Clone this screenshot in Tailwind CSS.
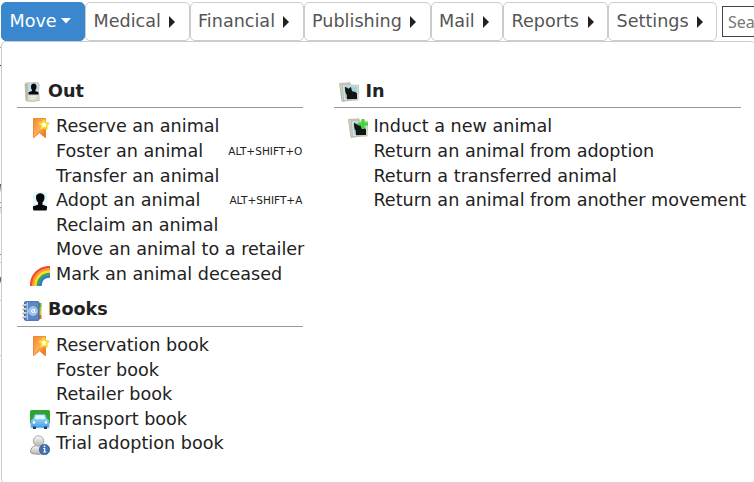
<!DOCTYPE html>
<html lang="en"><head><meta charset="utf-8"><title>Move menu</title>
<script src="https://cdn.jsdelivr.net/npm/@tailwindcss/browser@4"></script></head>
<body class="w-[754px] h-[482px] overflow-hidden bg-white font-['DejaVu_Sans',sans-serif] text-[17.6px] text-[#222]">
<svg width="0" height="0" class="absolute">
<defs>
<linearGradient id="org" x1="0" y1="0" x2="1" y2="1"><stop offset="0" stop-color="#f08a30"/><stop offset=".5" stop-color="#ffac58"/><stop offset="1" stop-color="#ec6410"/></linearGradient>
<linearGradient id="grey" x1="0" y1="0" x2="0" y2="1"><stop offset="0" stop-color="#fafafa"/><stop offset="1" stop-color="#b4b4b0"/></linearGradient>
<linearGradient id="blue" x1="0" y1="0" x2="0" y2="1"><stop offset="0" stop-color="#c5e6fb"/><stop offset="1" stop-color="#3f9fe8"/></linearGradient>
<symbol id="bookmark" viewBox="0 0 20 20"><path d="M3.500.5h12v19.300L9.500 14.800 3.500 19.800z" fill="url(#org)" stroke="#e87820" stroke-width=".8"/><path d="M14 2l1.500 2.700 3.200.6-2.200 2.400.4 3.200-2.900-1.400-2.900 1.400.4-3.200-2.200-2.400 3.200-.6z" fill="#fffde8" stroke="#f5da28" stroke-width="1.700" stroke-linejoin="round"/></symbol>
<symbol id="person" viewBox="0 0 20 20"><rect x="3" y="0" width="14" height="17" rx="4" fill="#e4f6fc"/><path d="M6 5c0-5 8.500-5 8.500 0 0 2-.5 4-2 5.500v2.200l4.500 1.500q.5 2-.5 4.300H3.500Q2.500 16 3 14.200l5-1.500v-2.200C6.500 9 6 7 6 5z" fill="#070707"/></symbol>
<symbol id="out" viewBox="0 0 20 20"><path d="M3 2q0-1 1-1l12-.5 1.200 2-.7 7 .8 9q-7 1.500-13 .5z" fill="#dcddcf" stroke="#b5b6a6" stroke-width=".8"/><path d="M3 2.500l3-1 .3 5-.6 12L3.500 18z" fill="#b9bbab"/><rect x="7" y="1.500" width="9.500" height="11" fill="#b9dcee"/><path d="M9 4.500c0-4 5.500-4 5.500 0 0 2-.5 3-1.200 3.500v1l3.200 1.200V12.500H6.500v-2.300L10 9V8C9.300 7.400 9 6 9 4.500z" fill="#090a0b"/><path d="M8 14.700h6M8 16.700h5" stroke="#eff0e6"/></symbol>
<symbol id="cat" viewBox="0 0 20 20"><path d="M.5 1.500L11 .8l2 17-10 1.700z" fill="#cfd0c0" stroke="#aaa999" stroke-width=".7"/><path d="M3.500 2.800l16 .5L19 18l-14.500.7z" fill="#e3e6dc" stroke="#adaea4" stroke-width=".7"/><path d="M5.200 4.300l13 .2-.2 11.800-12 .4z" fill="#9bd3df"/><path d="M6 4.800l3.500 2L12 5l1 4.300c2 .3 4.200.7 5 2.200V17l-10 .2c-.4-2 .3-3.500-.4-4.700C6.300 11.500 6 8 6 4.800z" fill="#141414"/></symbol>
</defs></svg>
<div class="relative w-[754px] h-[482px] overflow-hidden">
<div class="absolute left-0 top-[41px] w-2 h-[441px] bg-[#fcfcfc] flex flex-col">
<i class="h-px mt-[6px] bg-[#aaa]"></i><i class="h-px mt-[17px] bg-[#333]"></i><i class="h-[8px] mt-[118px] bg-linear-to-b from-[#555] to-[#eee]"></i><i class="h-px mt-[10px] bg-[#999]"></i><i class="h-px mt-[4px] bg-[#999]"></i><i class="h-[5px] bg-[#ddd]"></i><i class="h-px mt-[41px] bg-[#888]"></i><i class="h-px mt-[7px] bg-[#ccc]"></i><i class="h-[2px] mt-[14px] bg-[#4479bd]"></i><i class="h-[2px] bg-[#8d4b35]"></i><i class="h-[2px] bg-[#efa14c]"></i><i class="h-px mt-[17px] bg-[#ccc]"></i><i class="h-px mt-[54px] bg-[#ccc]"></i>
</div>
<nav class="relative flex pl-px pt-[2px] h-[41px] text-[#555]">
<div class="flex-none w-[84px] h-[39px] rounded-[5px] border border-[#3a87cd] bg-[#3a87cd] text-white pl-[7.500px] flex items-center">Move<svg class="ml-[4.500px] mb-[2px]" width="10" height="6"><path d="M0 0h10L5 5.500z" fill="#fff"/></svg></div>
<div class="flex-none w-[105px] h-[39px] rounded-[5px] border border-[#ccc] pl-[7.500px] pr-[14px] flex items-center justify-between">Medical<svg width="6" height="12"><path d="M0 0v12L6 6z" fill="#222"/></svg></div>
<div class="flex-none w-[114px] h-[39px] rounded-[5px] border border-[#ccc] pl-[7px] pr-[14px] flex items-center justify-between">Financial<svg width="6" height="12"><path d="M0 0v12L6 6z" fill="#222"/></svg></div>
<div class="flex-none w-[127px] h-[39px] rounded-[5px] border border-[#ccc] pl-[7px] pr-[14px] flex items-center justify-between">Publishing<svg width="6" height="12"><path d="M0 0v12L6 6z" fill="#222"/></svg></div>
<div class="flex-none w-[72px] h-[39px] rounded-[5px] border border-[#ccc] pl-[7px] pr-[13px] flex items-center justify-between">Mail<svg width="6" height="12"><path d="M0 0v12L6 6z" fill="#222"/></svg></div>
<div class="flex-none w-[105px] h-[39px] rounded-[5px] border border-[#ccc] pl-[7.500px] pr-[13px] flex items-center justify-between">Reports<svg width="6" height="12"><path d="M0 0v12L6 6z" fill="#222"/></svg></div>
<div class="flex-none w-[109px] h-[39px] rounded-[5px] border border-[#ccc] pl-[7.500px] pr-[13px] flex items-center justify-between">Settings<svg width="6" height="12"><path d="M0 0v12L6 6z" fill="#222"/></svg></div>
<div class="flex-none ml-[5px] mt-1 w-[32px] h-[31px] border border-r-0 border-[#444] bg-white pl-[5px] pt-px text-[16px] text-[#777] font-['Noto_Sans',sans-serif] flex items-center">Sea</div>
</nav>
<main class="relative ml-px w-[755px] h-[443px] rounded-[5px] border border-[#ccc] bg-white flex leading-[24.64px] whitespace-nowrap">
<div class="flex-none w-[286px] ml-[15px] pt-[37px]">
<h2 class="font-bold flex h-[29px] border-b border-[#999]"><svg class="ml-[5px] mr-[6px] mt-[3px]" width="20" height="20"><use href="#out"/></svg>Out</h2>
<ul class="pt-[6px]">
<li class="flex h-[24.64px]"><svg class="ml-[13px] mr-[6px] mt-[4px]" width="20" height="20"><use href="#bookmark"/></svg>Reserve an animal</li>
<li class="flex h-[24.64px] pl-[39px] pr-[.6px] justify-between">Foster an animal<span class="text-[10.560px]">ALT+SHIFT+O</span></li>
<li class="h-[24.64px] pl-[39px] pt-[.3px]">Transfer an animal</li>
<li class="flex h-[24.64px] pr-[.6px]"><svg class="ml-[13px] mr-[6px] mt-[4px]" width="20" height="20"><use href="#person"/></svg><span class="grow">Adopt an animal</span><span class="text-[10.560px]">ALT+SHIFT+A</span></li>
<li class="h-[24.64px] pl-[39px]">Reclaim an animal</li>
<li class="h-[24.64px] pl-[39px]">Move an animal to a retailer</li>
<li class="flex h-[24.64px]"><svg class="ml-[13px] mr-[6px] mt-[4px]" width="20" height="20" fill="none" stroke-width="2.700"><path d="M1.200 20C1.200 9 9 1.200 20 1.200" stroke="#f04b35"/><path d="M3.500 20C3.500 10 10 3.500 20 3.500" stroke="#ff9d23"/><path d="M5.800 20C5.800 12 12 5.800 20 5.800" stroke="#f4df36"/><path d="M8 20C8 13 13 8 20 8" stroke="#38a947"/><path d="M10.300 20c0-6 4-9.700 9.700-9.700" stroke="#3477d3"/></svg>Mark an animal deceased</li>
</ul>
<h2 class="font-bold flex h-[29.500px] mt-[11px] border-b border-[#999]"><svg class="ml-[5px] mr-[6px] mt-[4px]" width="20" height="20"><path d="M17 2h2.500v4H17z" fill="#67b52e"/><path d="M17 6h2.500v4H17z" fill="#a9c93a"/><path d="M17 10h2.500v4H17z" fill="#edc328"/><path d="M17 14h2.500v4H17z" fill="#e06b30"/><rect x="2.500" y=".7" width="14.500" height="18.600" rx="1" fill="#5b8ac7" stroke="#345f9e"/><path d="M5.500 1v18" stroke="#a7c8ec"/><circle cx="11" cy="10" r="4.200" fill="#98bde8" stroke="#bcd5f0"/><circle cx="11" cy="10" r="1.500" fill="none" stroke="#fff"/><path d="M12.500 8v3l1.500.5" fill="none" stroke="#fff"/><path d="M.5 4h4M.5 8h4M.5 12h4M.5 16h4" stroke="#ddd" stroke-width="2"/><path d="M.5 5h4M.5 9h4M.5 13h4M.5 17h4" stroke="#777" stroke-width=".7"/></svg>Books</h2>
<ul class="pt-[6px]">
<li class="flex h-[24.64px]"><svg class="ml-[13px] mr-[6px] mt-[3px]" width="20" height="20"><use href="#bookmark"/></svg>Reservation book</li>
<li class="h-[24.64px] pl-[39px]">Foster book</li>
<li class="h-[24.64px] pl-[39px]">Retailer book</li>
<li class="flex h-[24.64px]"><svg class="ml-[13px] mr-[6px] mt-[3px]" width="20" height="20"><path d="M0 1.500Q0 0 1.500 0h17Q20 0 20 1.500V13H0z" fill="#30a52b"/><path d="M0 13h20v6H0z" fill="#edf5f8"/><path d="M3.500 8.500L5 4.500h10l1.500 4L19 10.500v6q0 1-1 1H2q-1 0-1-1v-6z" fill="url(#blue)" stroke="#62aee7" stroke-width=".7"/><path d="M5 9l1.200-3.500h7.600L15 9z" fill="#e1f5ff"/><path d="M3 16.500h3V19H3zM14 16.500h3V19h-3z" fill="#263e50"/><circle cx="4" cy="12.500" r="1.300" fill="#fff"/><circle cx="16" cy="12.500" r="1.300" fill="#fff"/></svg>Transport book</li>
<li class="flex h-[24.64px]"><svg class="ml-[13px] mr-[6px] mt-[4px]" width="20" height="20"><path d="M.5 17c0-4 2.500-6 5.500-6.500h5c3.500.5 5.500 3 5.500 6.500 0 3-16 3-16 0z" fill="url(#grey)" stroke="#999"/><circle cx="8.500" cy="6" r="5.200" fill="url(#grey)" stroke="#aaa"/><circle cx="14.500" cy="14.500" r="5.200" fill="#426fad" stroke="#254e8c" stroke-width=".6"/><path d="M13.300 13.500h1.400V17m-1.500 0h3" fill="none" stroke="#fff" stroke-width="1.200"/><circle cx="14.500" cy="11.300" r=".9" fill="#fff"/></svg>Trial adoption book</li>
</ul></div>
<div class="flex-none w-[407px] ml-[31px] pt-[37px]">
<h2 class="font-bold flex h-[29px] border-b border-[#999]"><svg class="ml-[5px] mr-[6.400px] mt-[3px]" width="20" height="20"><use href="#cat"/></svg>In</h2>
<ul class="pt-[6px]">
<li class="flex h-[24.64px]"><svg class="ml-[14px] mr-[5.400px] mt-[4px]" width="20" height="20"><use href="#cat"/><path d="M13.500 1h3v3.500H20v3h-3.500V11h-3V7.500H10v-3h3.500z" fill="#42d72b"/></svg>Induct a new animal</li>
<li class="h-[24.64px] pl-[39.400px]">Return an animal from adoption</li>
<li class="h-[24.64px] pl-[39.400px] pt-[.3px]">Return a transferred animal</li>
<li class="h-[24.64px] pl-[39.400px]">Return an animal from another movement</li>
</ul></div>
</main></div></body></html>
